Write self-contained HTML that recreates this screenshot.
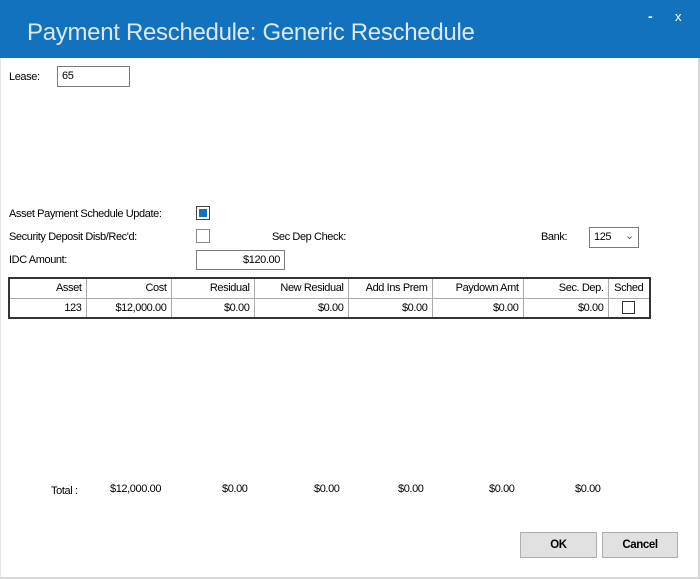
<!DOCTYPE html>
<html><head><style>
*{margin:0;padding:0;box-sizing:border-box}
body{width:700px;height:579px;background:#fff;font-family:"Liberation Sans",sans-serif;font-size:11px;color:#000;position:relative;overflow:hidden;letter-spacing:-0.4px}
.a{position:absolute;white-space:nowrap}
.title{position:absolute;left:0;top:0;width:700px;height:58px;background:#1272bd}
.frame{position:absolute;left:0;top:58px;width:700px;height:521px;border-right:2px solid #d8d8d8;border-bottom:2px solid #d8d8d8;border-left:1px solid #e6e6e6}
.box{position:absolute;border:1px solid #7a7a7a;background:#fff}
table{position:absolute;left:8px;top:277px;width:643px;border-collapse:collapse;border:2px solid #333}
td{border:1px solid #aaa;height:20px;text-align:right;padding:0 4px;font-size:11px}
.btn{position:absolute;background:#e1e1e1;border:1px solid #adadad;font-weight:bold;text-align:center;line-height:24px;font-size:11.5px}
</style></head><body>
<div class="title"></div>
<div class="a" style="left:27px;top:19px;font-size:24px;color:#dce9f5;letter-spacing:-0.3px">Payment Reschedule: Generic Reschedule</div>
<div class="a" style="left:648px;top:8px;color:#fff;font-size:14px;font-weight:bold">-</div>
<div class="a" style="left:675px;top:9px;color:#fff;font-size:13px">x</div>
<div class="frame"></div>
<div class="a" style="left:9px;top:71px">Lease:</div>
<div class="box" style="left:57px;top:66px;width:73px;height:21px;padding:3px 4px">65</div>
<div class="a" style="left:9px;top:208px">Asset Payment Schedule Update:</div>
<div class="box" style="left:196px;top:206px;width:14px;height:14px;border-color:#444"><div style="margin:2px;width:8px;height:8px;background:#1272bd"></div></div>
<div class="a" style="left:9px;top:231px">Security Deposit Disb/Rec'd:</div>
<div class="box" style="left:196px;top:229px;width:14px;height:14px;border-color:#888"></div>
<div class="a" style="left:272px;top:231px">Sec Dep Check:</div>
<div class="a" style="left:541px;top:231px">Bank:</div>
<div class="box" style="left:589px;top:227px;width:50px;height:21px;padding:3px 4px">125 <span style="position:absolute;left:35px;top:1px;color:#555">&#8964;</span></div>
<div class="a" style="left:9px;top:254px">IDC Amount:</div>
<div class="box" style="left:196px;top:250px;width:89px;height:20px;text-align:right;padding:3px 4px">$120.00</div>
<table>
<tr><td style="width:77px">Asset</td><td style="width:85px">Cost</td><td style="width:83px">Residual</td><td style="width:94px">New Residual</td><td style="width:84px">Add Ins Prem</td><td style="width:91px">Paydown Amt</td><td style="width:85px">Sec. Dep.</td><td style="text-align:center">Sched</td></tr>
<tr><td>123</td><td>$12,000.00</td><td>$0.00</td><td>$0.00</td><td>$0.00</td><td>$0.00</td><td>$0.00</td><td style="text-align:center"><div style="display:inline-block;width:13px;height:13px;border:1px solid #333;vertical-align:middle"></div></td></tr>
</table>
<div class="a" style="left:51px;top:485px">Total :</div>
<div class="a" style="left:110px;top:483px">$12,000.00</div>
<div class="a" style="left:222px;top:483px">$0.00</div>
<div class="a" style="left:314px;top:483px">$0.00</div>
<div class="a" style="left:398px;top:483px">$0.00</div>
<div class="a" style="left:489px;top:483px">$0.00</div>
<div class="a" style="left:575px;top:483px">$0.00</div>
<div class="btn" style="left:520px;top:532px;width:77px;height:26px">OK</div>
<div class="btn" style="left:602px;top:532px;width:76px;height:26px">Cancel</div>
</body></html>
